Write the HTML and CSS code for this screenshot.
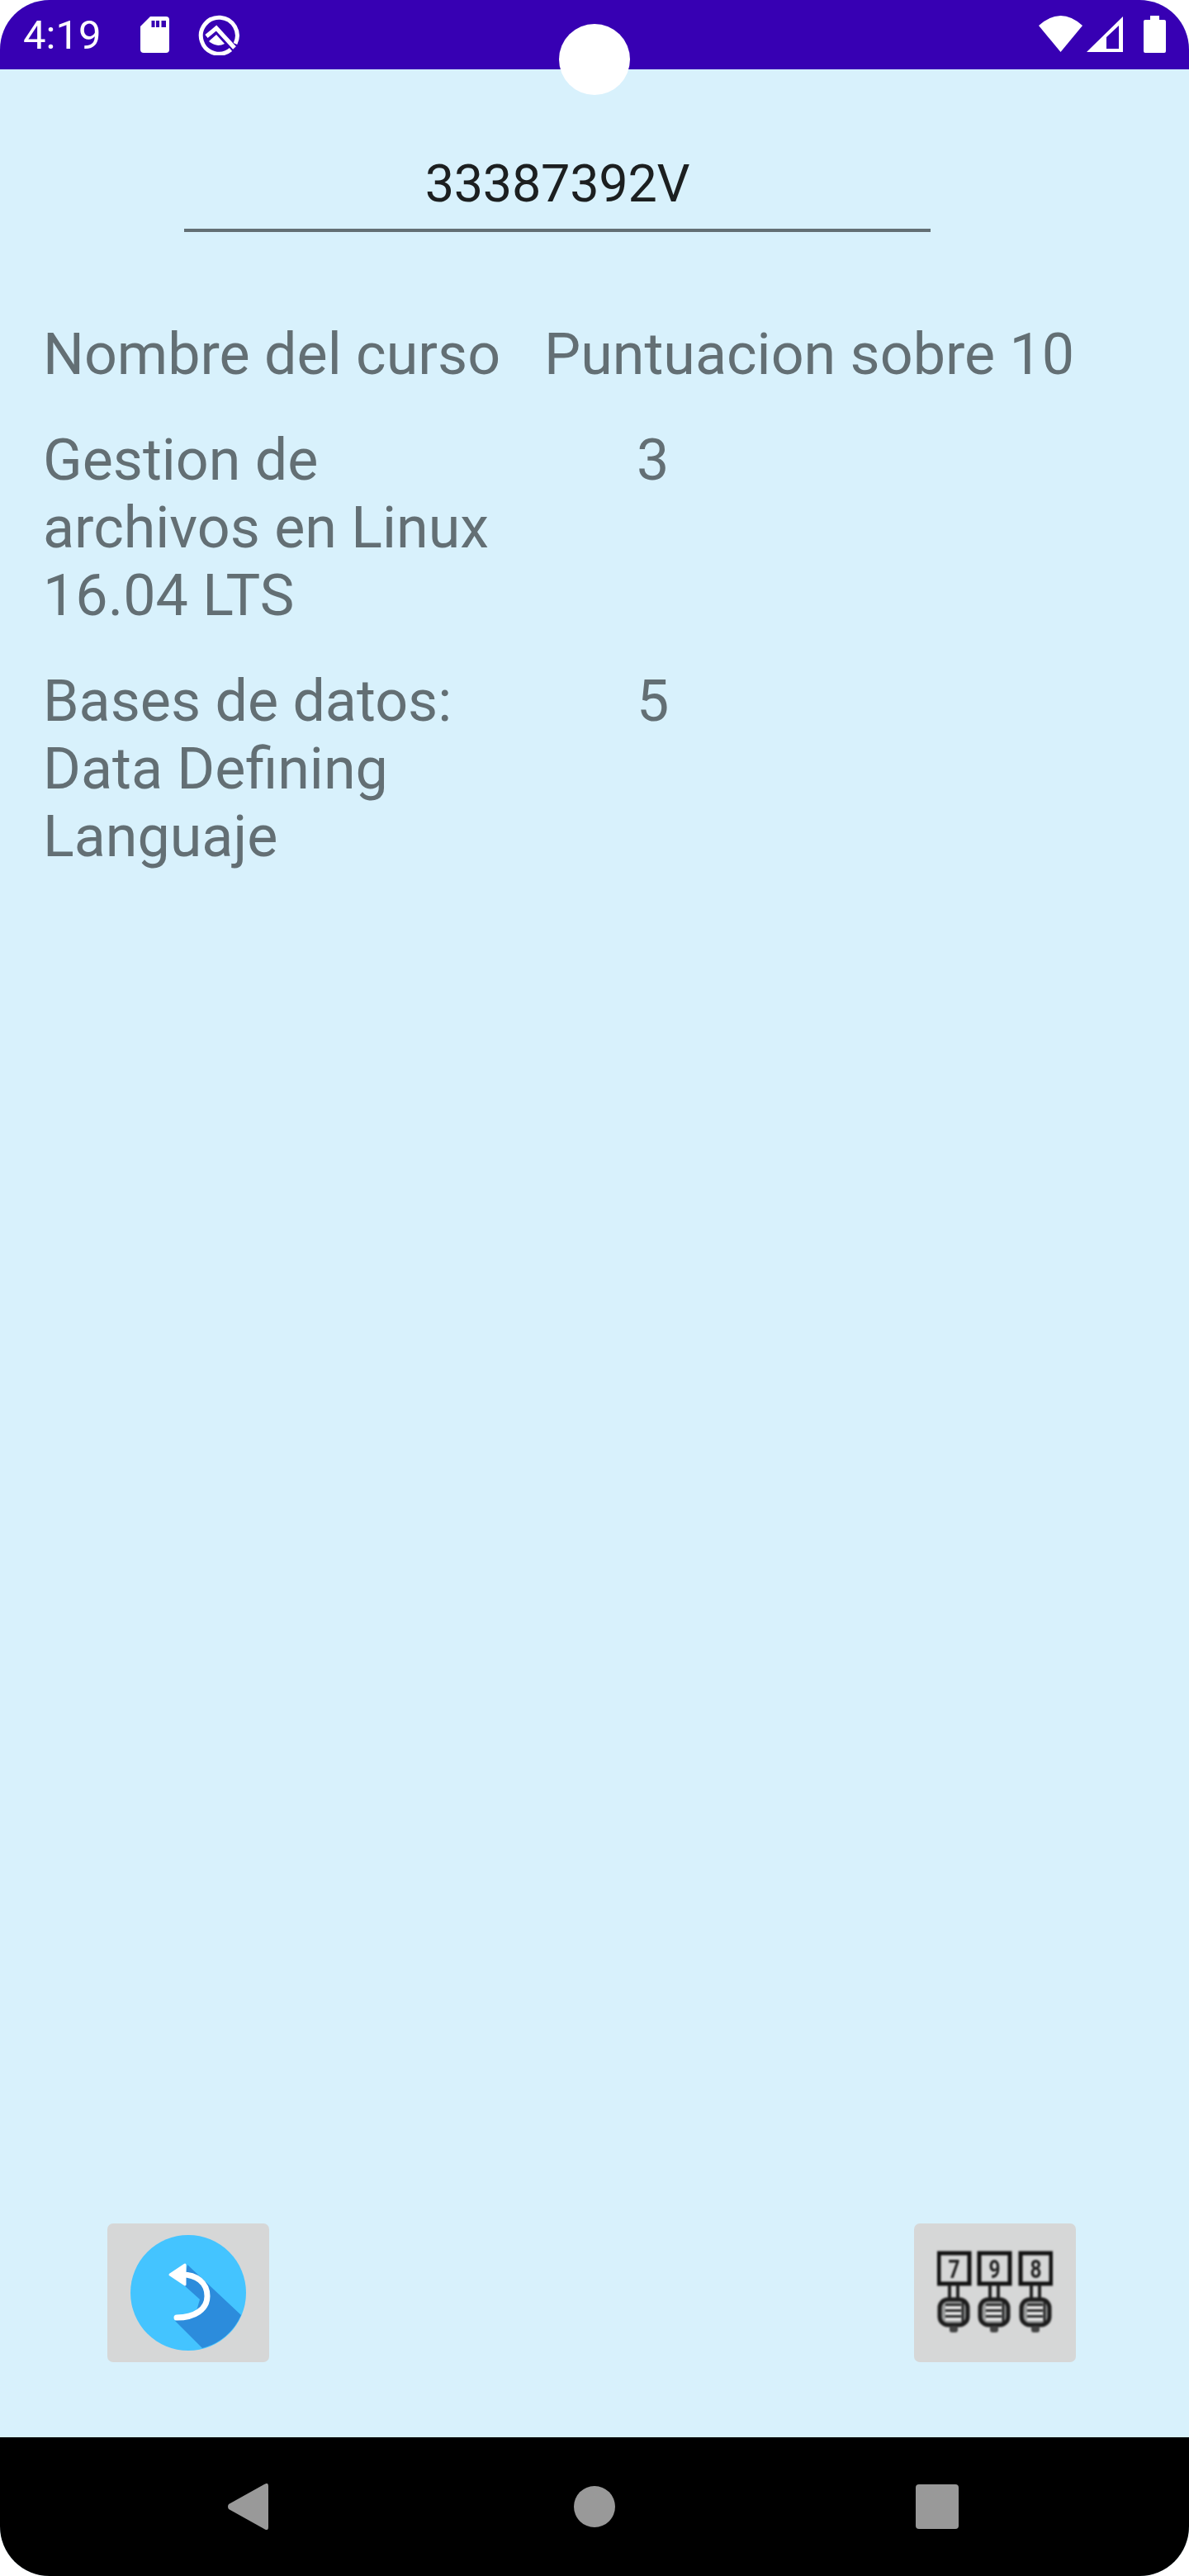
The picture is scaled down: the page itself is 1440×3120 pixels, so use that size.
FILE: index.html
```html
<!DOCTYPE html>
<html lang="es">
<head>
    <meta charset="UTF-8">
    <meta name="viewport" content="width=device-width, initial-scale=1.0">
    <title>Puntuaciones</title>
    <link rel="stylesheet" href="styles.css">
</head>
<body>
    <div class="screen">
        <header class="status-bar">
            <span class="status-time">4:19</span>
            <svg class="icon-sd" viewBox="0 0 35 44">
                <path fill="#fff" d="M12 0H31Q35 0 35 4V40Q35 44 31 44H4Q0 44 0 40V12Z"/>
                <path fill="#3700b3" d="M13.5 5H17.5V13H13.5ZM19 5H23V13H19ZM25.5 5H31V13H25.5Z"/>
            </svg>
            <svg class="icon-q" viewBox="0 0 50 50">
                <path fill="none" stroke="#fff" stroke-width="5" d="M39.5 43A22 22 0 1 1 45 36"/>
                <path fill="none" stroke="#fff" stroke-width="5" d="M10 27L22 17L44 41"/>
                <path fill="#fff" d="M13 33L22 25L32 36Q22 41 13 33Z"/>
            </svg>
            <span class="status-spacer"></span>
            <svg class="icon-wifi" viewBox="0 0 53 44">
                <path fill="#fff" d="M0 12Q26.5 -12 53 12L26.5 44Z"/>
            </svg>
            <svg class="icon-signal" viewBox="0 0 44 43">
                <path fill="#fff" fill-rule="evenodd" d="M0 43L44 0V43ZM24 25V39H39V11Z"/>
            </svg>
            <svg class="icon-battery" viewBox="0 0 27 45">
                <path fill="#fff" d="M8 0H19V5H25Q27 5 27 7V43Q27 45 25 45H2Q0 45 0 43V7Q0 5 2 5H8Z"/>
            </svg>
        </header>
        <div class="camera"></div>

        <main class="content">
            <div class="dni-field">33387392V</div>

            <div class="scores">
                <div>Nombre del curso</div>
                <div class="score-head">Puntuacion sobre 10</div>
                <div>Gestion de archivos en Linux 16.04 LTS</div>
                <div class="score-value">3</div>
                <div>Bases de datos: Data Defining Languaje</div>
                <div class="score-value">5</div>
            </div>

            <div class="actions">
                <button class="image-btn" type="button">
                    <svg class="btn-icon" viewBox="0 0 140 140">
                        <circle cx="70" cy="70" r="70" fill="#44c4ff"/>
                        <path fill="#2c8cdc" d="M69 36L134 97A70 70 0 0 1 87 137L54 104L80 92L84 78L64 60Z"/>
                        <path fill="none" stroke="#fff" stroke-width="7" stroke-linecap="round" d="M60 48C80 47 93 58 93 74C93 90 78 100 56 100"/>
                        <path fill="#fff" stroke="#fff" stroke-width="3" stroke-linejoin="round" d="M48 48L66 36V60Z"/>
                    </svg>
                </button>
                <button class="image-btn" type="button">
                    <svg class="btn-icon btn-icon-lock" viewBox="0 0 140 140">
                        <defs>
                            <g id="fist">
                                <rect x="3" y="78" width="34" height="31" rx="10" fill="#9a9c9c" stroke="#1c1c1c" stroke-width="5"/>
                                <path fill="none" stroke="#f2f2f2" stroke-width="3" d="M10 88H29M10 95H29M10 102H29"/>
                                <path fill="none" stroke="#1c1c1c" stroke-width="2.5" d="M10 84.500H29M10 91.500H29M10 98.500H29M31 80V107"/>
                                <rect x="15" y="110" width="10" height="8" rx="3" fill="#444"/>
                                <path fill="none" stroke="#222" stroke-width="4" d="M15 60V76M25 60V76"/>
                            </g>
                        </defs>
                        <rect x="2" y="22" width="37" height="37" fill="none" stroke="#111" stroke-width="5"/>
                        <rect x="51" y="22" width="37" height="37" fill="none" stroke="#111" stroke-width="5"/>
                        <rect x="101" y="22" width="37" height="37" fill="none" stroke="#111" stroke-width="5"/>
                        <text class="lock-digit" x="20.500" y="52" textLength="14" lengthAdjust="spacingAndGlyphs">7</text>
                        <text class="lock-digit" x="69.500" y="52" textLength="14" lengthAdjust="spacingAndGlyphs">9</text>
                        <text class="lock-digit" x="119.500" y="52" textLength="14" lengthAdjust="spacingAndGlyphs">8</text>
                        <use href="#fist"/>
                        <use href="#fist" x="49"/>
                        <use href="#fist" x="99"/>
                    </svg>
                </button>
            </div>
        </main>

        <footer class="nav-bar">
            <svg class="nav-back" viewBox="0 0 49 56">
                <path fill="#999" d="M1 31Q-1 28 1 25L44 1Q49 -2 49 3V53Q49 58 44 55Z"/>
            </svg>
            <span class="nav-home"></span>
            <span class="nav-recent"></span>
        </footer>
    </div>
</body>
</html>
```

FILE: styles.css
```css
* {
    box-sizing: border-box;
}
body {
    margin: 0;
    background-color: #fff;
    font-family: Roboto, "Liberation Sans", sans-serif;
}
.screen {
    position: relative;
    display: flex;
    flex-direction: column;
    height: 3120px;
    border-radius: 60px;
    overflow: hidden;
    background-color: #d8f1fc;
}

/* barra de estado */
.status-bar {
    display: flex;
    align-items: flex-start;
    flex: 0 0 84px;
    background-color: #3700b3;
}
.status-time {
    margin: 14px 0 0 28px;
    width: 142px;
    font-size: 49px;
    line-height: 57px;
    color: #fff;
}
.status-spacer {
    flex: 1;
}
.status-bar svg {
    display: block;
}
.icon-sd {
    width: 35px;
    height: 44px;
    margin-top: 20px;
}
.icon-q {
    width: 50px;
    height: 50px;
    margin: 17px 0 0 35px;
}
.icon-wifi {
    width: 53px;
    height: 44px;
    margin-top: 19px;
}
.icon-signal {
    width: 44px;
    height: 43px;
    margin: 20px 0 0 5px;
}
.icon-battery {
    width: 27px;
    height: 45px;
    margin: 19px 28px 0 25px;
}
.camera {
    position: absolute;
    top: 29px;
    left: 677px;
    width: 86px;
    height: 86px;
    border-radius: 50%;
    background-color: #fff;
}

/* contenido */
.content {
    display: flex;
    flex-direction: column;
    flex: 1;
    min-height: 0;
}
.dni-field {
    width: 904px;
    height: 95px;
    margin: 102px 0 0 223px;
    border-bottom: 4px solid #636f74;
    font-size: 63px;
    line-height: 74px;
    letter-spacing: -0.3px;
    text-align: center;
    color: #1c1f20;
}
.scores {
    display: grid;
    grid-template-columns: 607px auto;
    justify-content: start;
    row-gap: 46px;
    margin: 107px 0 0 52px;
    font-size: 70px;
    line-height: 82px;
    color: #636f74;
}
.score-value {
    padding-left: 112px;
}
.actions {
    display: flex;
    justify-content: space-between;
    margin-top: auto;
    padding: 0 137px 91px 130px;
}
.image-btn {
    display: flex;
    align-items: center;
    justify-content: center;
    width: 196px;
    height: 168px;
    padding: 0;
    border: none;
    border-radius: 7px;
    background-color: #d6d7d7;
}
.btn-icon {
    width: 140px;
    height: 140px;
    filter: blur(0.7px);
}
.btn-icon-lock {
    filter: blur(1.1px);
}
.lock-digit {
    font-family: Roboto, sans-serif;
    font-size: 32px;
    font-weight: 700;
    text-anchor: middle;
    fill: #222;
}

/* barra de navegacion */
.nav-bar {
    position: relative;
    flex: 0 0 168px;
    display: flex;
    align-items: center;
    background-color: #000;
}
.nav-back {
    width: 49px;
    height: 56px;
    margin-left: 276px;
}
.nav-home {
    width: 50px;
    height: 50px;
    margin-left: 370px;
    border-radius: 50%;
    background-color: #999;
}
.nav-recent {
    width: 52px;
    height: 54px;
    margin-left: 364px;
    border-radius: 4px;
    background-color: #999;
}
```
